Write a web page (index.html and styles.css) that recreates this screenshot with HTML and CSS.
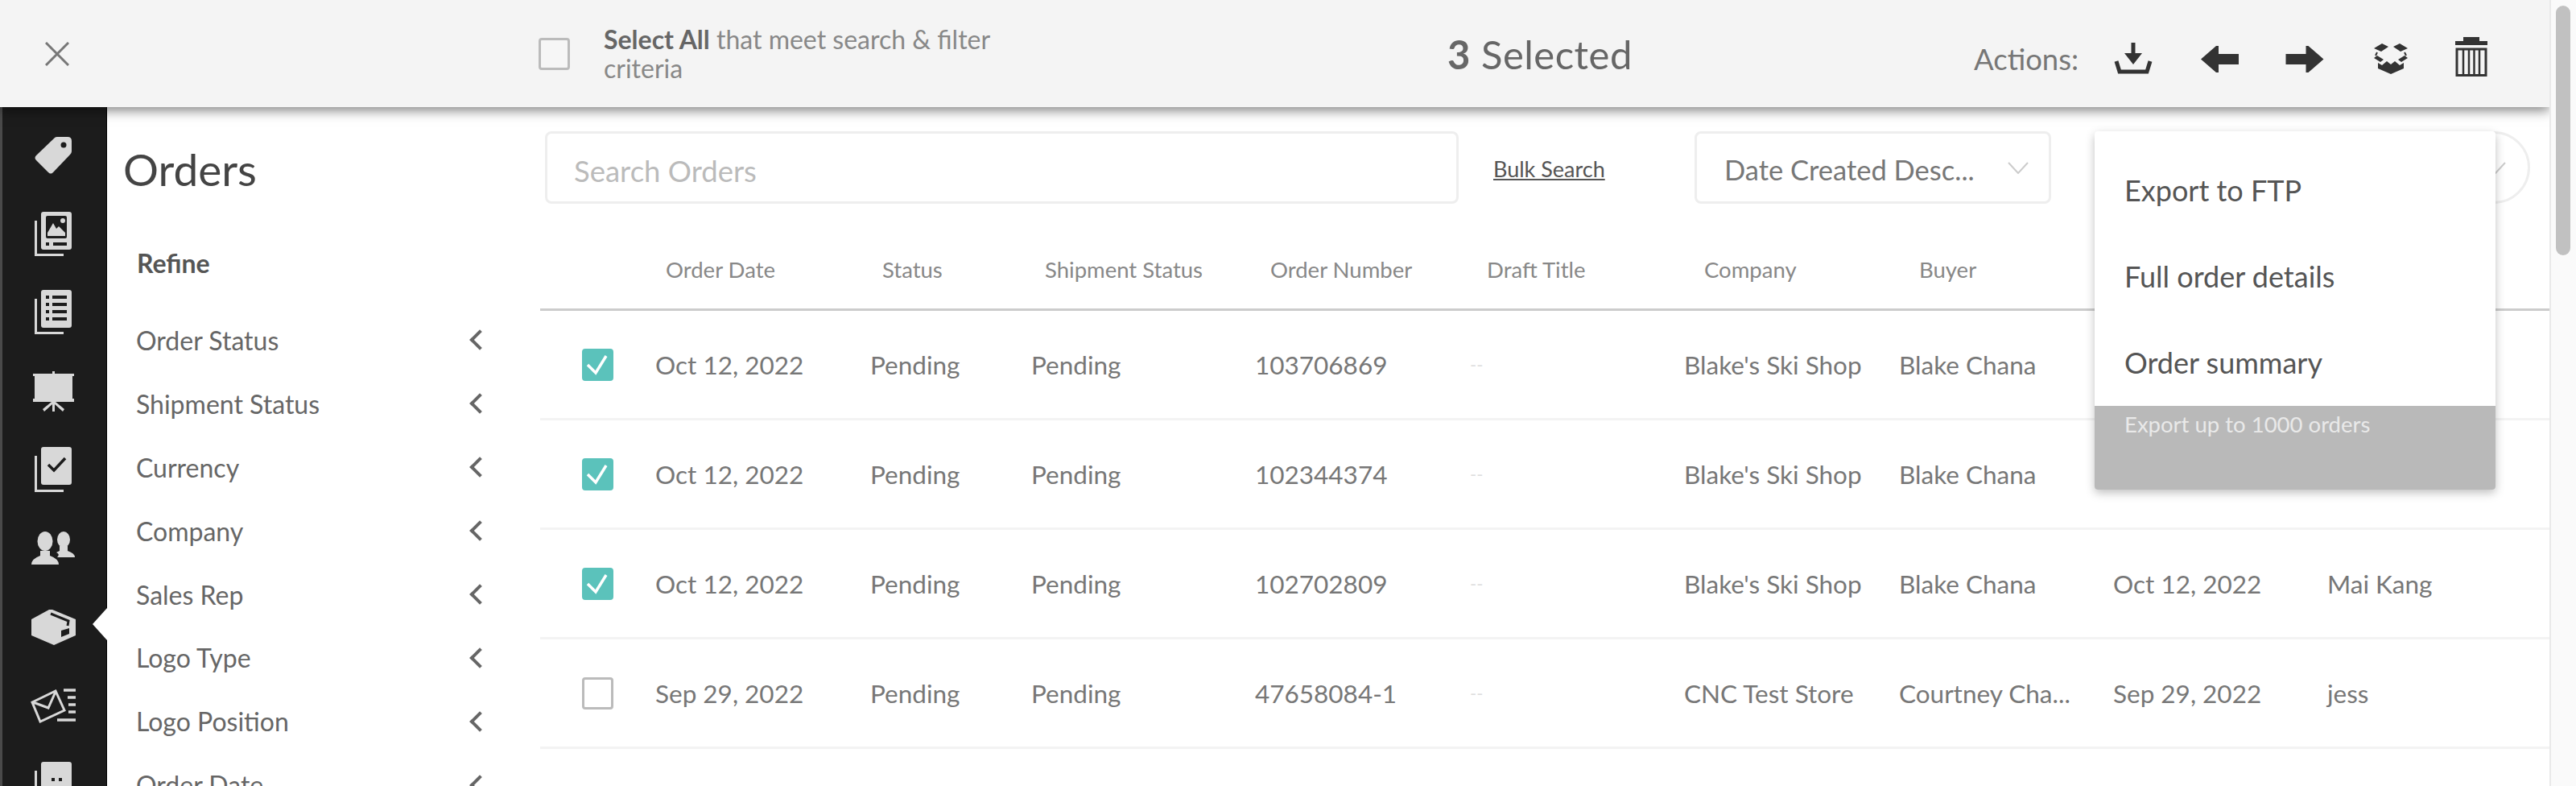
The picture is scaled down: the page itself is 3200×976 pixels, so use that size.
FILE: index.html
```html
<!DOCTYPE html>
<html lang="en">
<head>
<meta charset="utf-8">
<title>Orders</title>
<link rel="stylesheet" href="styles.css">
</head>
<body>
<div class="app">
  <header class="topbar">
    <div class="close"><svg width="30" height="30" viewBox="0 0 30 30"><path d="M1 1L29 29M29 1L1 29" stroke="#777" stroke-width="3" fill="none"/></svg></div>
    <div class="select-all">
      <span class="cb"></span>
      <p class="select-text"><b>Select All</b> that meet search &amp; filter criteria</p>
    </div>
    <div class="selected"><b>3</b> Selected</div>
    <div class="actions">
      <span class="actions-label">Actions:</span>
      <svg class="a-dl" width="48" height="40" viewBox="0 0 48 40"><path d="M24 0V14" stroke="#333" stroke-width="5"/><path d="M13 13H35L24 27Z" fill="#333"/><path d="M3 23L7 36H41L45 23" stroke="#333" stroke-width="5" fill="none"/></svg>
      <svg class="a-l" width="47" height="33" viewBox="0 0 47 33"><path d="M0 16.5L19 0H22V10H47V23H22V33H19Z" fill="#333"/></svg>
      <svg class="a-r" width="48" height="33" viewBox="0 0 47 33"><path d="M47 16.5L28 0H25V10H0V23H25V33H28Z" fill="#333"/></svg>
      <svg class="a-b" width="44" height="38" viewBox="0 0 44 38"><path d="M1 6L11 0L19 4L10 10ZM43 6L33 0L25 4L34 10ZM1 18L5 15L13 20L9 23ZM43 18L39 15L31 20L35 23ZM6 24L11 27L17 22L22 26L27 22L33 27L38 24V31L22 38L6 31Z" fill="#333"/><path d="M5 11L3 15M39 11L41 15" stroke="#333" stroke-width="2"/></svg>
      <svg class="a-t" width="40" height="49" viewBox="0 0 40 49"><path d="M10 0H30V5H40V10H0V5H10Z" fill="#333"/><path d="M2 15H38V47.5H2Z" fill="none" stroke="#333" stroke-width="3"/><path d="M10 16V47M17 16V47M23.500 16V47M30 16V47" stroke="#333" stroke-width="2.500"/></svg>
    </div>
  </header>
  <div class="body">
    <nav class="sidebar">
      <div class="nav-item"><svg width="46" height="47" viewBox="0 0 46 47"><path d="M28 1H41Q46 1 46 6V19Q46 21 44 23L23 45Q20 48 17 45L2 30Q-1 27 2 24L25 2Q26 1 28 1Z" fill="#d8d8d8"/><circle cx="36" cy="11" r="3.500" fill="#1c1c1c"/></svg></div>
      <div class="nav-item"><svg width="46" height="55" viewBox="0 0 46 55"><path d="M1.500 11V53.500H36" fill="none" stroke="#d8d8d8" stroke-width="3"/><rect x="8" y="0" width="38" height="47" rx="3" fill="#d8d8d8"/><rect x="14" y="5" width="26" height="28" rx="2" fill="#1c1c1c"/><path d="M16 26L23 14L27 21L30 18L38 26V30H16Z" fill="#d8d8d8"/><circle cx="35" cy="11" r="3" fill="#d8d8d8"/><rect x="14" y="38" width="4" height="4" fill="#1c1c1c"/><rect x="23" y="38" width="17" height="4" fill="#1c1c1c"/></svg></div>
      <div class="nav-item"><svg width="46" height="55" viewBox="0 0 46 55"><path d="M1.500 11V53.500H36" fill="none" stroke="#d8d8d8" stroke-width="3"/><rect x="8" y="0" width="38" height="47" rx="3" fill="#d8d8d8"/><path d="M14 7h4v4h-4zM22 7h18v4H22zM14 16h4v4h-4zM22 16h18v4H22zM14 25h4v4h-4zM22 25h18v4H22zM14 34h4v4h-4zM22 34h18v4H22z" fill="#1c1c1c"/></svg></div>
      <div class="nav-item"><svg width="51" height="50" viewBox="0 0 51 50"><path d="M24 0H27V3H51V6H49V34H51V38H28L39 47L37 50L27 41V50H24V41L14 50L12 47L23 38H0V34H2V6H0V3H24Z" fill="#d8d8d8"/></svg></div>
      <div class="nav-item"><svg width="46" height="56" viewBox="0 0 46 56"><path d="M1.500 11V54.500H36" fill="none" stroke="#d8d8d8" stroke-width="3"/><rect x="8" y="0" width="38" height="47" rx="3" fill="#d8d8d8"/><path d="M17 22L24 29L38 14" fill="none" stroke="#1c1c1c" stroke-width="3.500"/></svg></div>
      <div class="nav-item"><svg width="54" height="41" viewBox="0 0 54 41"><ellipse cx="17" cy="12" rx="9.500" ry="12" fill="#d8d8d8"/><path d="M0 41Q0 34 11 30V24H23V30Q34 34 34 41Z" fill="#d8d8d8"/><ellipse cx="40" cy="10" rx="8" ry="10" fill="#d8d8d8"/><path d="M32 32H54Q54 27 45 24V18H35V24Q33 25 31 26Q36 28 32 32Z" fill="#d8d8d8"/></svg></div>
      <div class="nav-item active"><svg width="55" height="45" viewBox="0 0 55 45"><path d="M0 13L22 1H26L55 13V33L28 45L0 33Z" fill="#d8d8d8"/><path d="M24 6L46 15L45 21" fill="none" stroke="#1c1c1c" stroke-width="3"/><path d="M37 27L47 24V31L37 35Z" fill="#1c1c1c"/></svg></div>
      <div class="nav-item"><svg width="56" height="44" viewBox="0 0 56 44"><path d="M2 18L31 4L42 28L12 42ZM3 18L22 25L31 5" fill="none" stroke="#d8d8d8" stroke-width="3"/><path d="M41 3H56M46 12H56M47 21H56M47 30H56M33 40H56" stroke="#d8d8d8" stroke-width="3.500"/></svg></div>
      <div class="nav-item"><svg width="46" height="56" viewBox="0 0 46 56"><path d="M1.500 11V54.500H36" fill="none" stroke="#d8d8d8" stroke-width="3"/><rect x="8" y="0" width="38" height="47" rx="3" fill="#d8d8d8"/><path d="M21 20h4v4h-4zM30 20h4v4h-4z" fill="#1c1c1c"/></svg></div>
    </nav>
    <aside class="filters">
      <h1 class="title">Orders</h1>
      <h2 class="refine">Refine</h2>
      <ul class="filter-list">
        <li>Order Status<i class="chev"></i></li>
        <li>Shipment Status<i class="chev"></i></li>
        <li>Currency<i class="chev"></i></li>
        <li>Company<i class="chev"></i></li>
        <li>Sales Rep<i class="chev"></i></li>
        <li>Logo Type<i class="chev"></i></li>
        <li>Logo Position<i class="chev"></i></li>
        <li>Order Date<i class="chev"></i></li>
      </ul>
    </aside>
    <main class="main">
      <div class="toolbar">
        <div class="search">Search Orders</div>
        <a class="bulk">Bulk Search</a>
        <div class="sort">Date Created Desc...<svg width="26" height="15" viewBox="0 0 26 15"><path d="M1 1L13 14L25 1" fill="none" stroke="#ccc" stroke-width="2"/></svg></div>
        <div class="export">
          <svg width="26" height="15" viewBox="0 0 26 15"><path d="M1 1L13 14L25 1" fill="none" stroke="#ccc" stroke-width="2"/></svg>
          <div class="menu">
            <div class="menu-items">
              <div class="menu-item">Export to FTP</div>
              <div class="menu-item">Full order details</div>
              <div class="menu-item">Order summary</div>
            </div>
            <div class="menu-foot">Export up to 1000 orders</div>
          </div>
        </div>
      </div>
      <div class="thead">
        <span>Order Date</span><span>Status</span><span>Shipment Status</span><span>Order Number</span><span>Draft Title</span><span>Company</span><span>Buyer</span>
      </div>
      <div class="row">
        <span class="cb on"><svg width="33" height="34" viewBox="0 0 33 34"><path d="M4 17L14 27L27 6" fill="none" stroke="#fff" stroke-width="3.500"/></svg></span>
        <span>Oct 12, 2022</span><span>Pending</span><span>Pending</span><span>103706869</span><span class="dash">--</span><span>Blake's Ski Shop</span><span>Blake Chana</span><span>Oct 12, 2022</span><span>Mai Kang</span>
      </div>
      <div class="row">
        <span class="cb on"><svg width="33" height="34" viewBox="0 0 33 34"><path d="M4 17L14 27L27 6" fill="none" stroke="#fff" stroke-width="3.500"/></svg></span>
        <span>Oct 12, 2022</span><span>Pending</span><span>Pending</span><span>102344374</span><span class="dash">--</span><span>Blake's Ski Shop</span><span>Blake Chana</span><span>Oct 12, 2022</span><span>Mai Kang</span>
      </div>
      <div class="row">
        <span class="cb on"><svg width="33" height="34" viewBox="0 0 33 34"><path d="M4 17L14 27L27 6" fill="none" stroke="#fff" stroke-width="3.500"/></svg></span>
        <span>Oct 12, 2022</span><span>Pending</span><span>Pending</span><span>102702809</span><span class="dash">--</span><span>Blake's Ski Shop</span><span>Blake Chana</span><span>Oct 12, 2022</span><span>Mai Kang</span>
      </div>
      <div class="row">
        <span class="cb"></span>
        <span>Sep 29, 2022</span><span>Pending</span><span>Pending</span><span>47658084-1</span><span class="dash">--</span><span>CNC Test Store</span><span>Courtney Cha...</span><span>Sep 29, 2022</span><span>jess</span>
      </div>
    </main>
  </div>
</div>
<div class="scrollbar"><div class="thumb"></div></div>
</body>
</html>
```
FILE: styles.css
```css
* { box-sizing: border-box; }
html, body { margin: 0; height: 976px; overflow: hidden; }
body { display: flex; font-family: "Lato", "Liberation Sans", sans-serif; background: #fff; color: #777; font-size: 28px; }
.app { width: 3167px; height: 976px; display: flex; flex-direction: column; overflow: hidden; }

.topbar { position: relative; z-index: 5; flex: 0 0 133px; height: 133px; background: #f4f4f4; box-shadow: 0 4px 14px rgba(0,0,0,.5); display: flex; align-items: center; }
.close { margin-left: 56px; width: 30px; height: 30px; margin-top: 1px; }
.close svg { display: block; }
.select-all { display: flex; align-items: center; margin-left: 583px; width: 520px; }
.cb { flex: none; display: block; width: 39px; height: 40px; border: 3px solid #bbb; border-radius: 4px; background: #fff; }
.topbar .cb { background: #f6f6f6; }
.cb.on { background: #5bc2bb; border-color: #5bc2bb; }
.cb svg { display: block; }
.select-text { margin: 0 0 0 42px; width: 490px; font-size: 32px; line-height: 36px; color: #888; flex: none; }
.select-text b { color: #666; font-weight: 700; }
.selected { margin-left: 609px; width: 300px; font-size: 49px; letter-spacing: .5px; color: #666; }
.selected b { font-weight: 700; }
.actions { display: flex; align-items: center; margin-left: 354px; margin-top: 13px; }
.actions-label { font-size: 36.5px; color: #777; width: 174px; flex: none; }
.a-l { margin-left: 60px; }
.a-r { margin-left: 58px; }
.a-b { margin-left: 61px; }
.a-t { margin-left: 58px; margin-top: -5px; }

.body { flex: 1; display: flex; min-height: 0; }
.sidebar { flex: 0 0 133px; width: 133px; background: #1c1c1c; border-left: 3px solid #4a4a4a; border-right: 1px solid #000; padding-top: 11px; }
.nav-item { position: relative; height: 97.6px; display: flex; align-items: center; justify-content: center; margin-left: -3px; }
.nav-item.active::after { content: ""; position: absolute; right: -1px; top: 25px; width: 0; height: 0; border-top: 20px solid transparent; border-bottom: 20px solid transparent; border-right: 18px solid #fff; }

.filters { flex: 0 0 538px; width: 538px; padding-left: 20px; }
.title { margin: 42px 0 0; font-size: 55px; line-height: 70px; font-weight: 400; color: #444; }
.refine { margin: 62px 0 0 17px; font-size: 32px; line-height: 40px; font-weight: 700; color: #555; }
.filter-list { list-style: none; margin: 36px 0 0 16px; padding: 0; width: 430px; }
.filter-list li { height: 78.9px; display: flex; align-items: center; justify-content: space-between; font-size: 32px; color: #666; }
.chev { display: block; width: 18px; height: 18px; margin-right: -6px; border-left: 4px solid #666; border-bottom: 4px solid #666; transform: rotate(45deg); }

.main { flex: 1; min-width: 0; padding-top: 30px; }
.toolbar { display: flex; height: 90px; padding-left: 6px; }
.search { width: 1135px; height: 90px; border: 3px solid #eee; border-radius: 8px; padding: 4px 0 0 33px; line-height: 84px; font-size: 36.5px; color: #bbb; }
.bulk { margin-left: 43px; width: 250px; line-height: 94px; font-size: 27px; text-decoration: underline; color: #555; height: 90px; }
.sort { width: 443px; height: 90px; border: 3px solid #eee; border-radius: 8px; padding: 4px 0 0 34px; font-size: 34.5px; color: #777; display: flex; align-items: center; }
.sort svg { margin-left: 41px; margin-top: -4px; }
.export { margin-left: 54px; width: 541px; height: 90px; border: 3px solid #eee; border-radius: 45px; position: relative; display: flex; align-items: center; justify-content: flex-end; padding-right: 27px; }
.menu { position: absolute; left: -3px; top: -3px; width: 498px; height: 445px; border-radius: 4px; overflow: hidden; box-shadow: 0 4px 12px rgba(0,0,0,.25); background: #fff; z-index: 3; display: flex; flex-direction: column; }
.menu-items { flex: 0 0 338px; padding-top: 20px; }
.menu-item { height: 107px; line-height: 107px; padding-left: 37px; font-size: 36px; color: #555; }
.menu-foot { flex: 1; background: #b9b9b9; color: #e9e9e9; padding: 8px 0 0 37px; font-size: 27.5px; line-height: 30px; }

.thead { display: grid; grid-template-columns: 269px 202px 280px 269px 270px 267px 1fr; height: 133px; padding-left: 156px; align-items: center; padding-top: 33px; border-bottom: 3px solid #ccc; font-size: 27.5px; color: #888; }
.row { display: grid; grid-template-columns: 91px 267px 200px 278px 267px 266px 267px 266px 266px 1fr; height: 136px; padding-left: 52px; align-items: center; border-bottom: 3px solid #f3f3f3; font-size: 31.5px; color: #777; white-space: nowrap; }
.row .dash { color: #ddd; font-size: 22px; }
.scrollbar { flex: 1; background: #fafafa; border-left: 2px solid #e9e9e9; padding: 7px 0 0 6px; }
.thumb { width: 18px; height: 310px; border-radius: 9px; background: #c1c1c1; }
```
